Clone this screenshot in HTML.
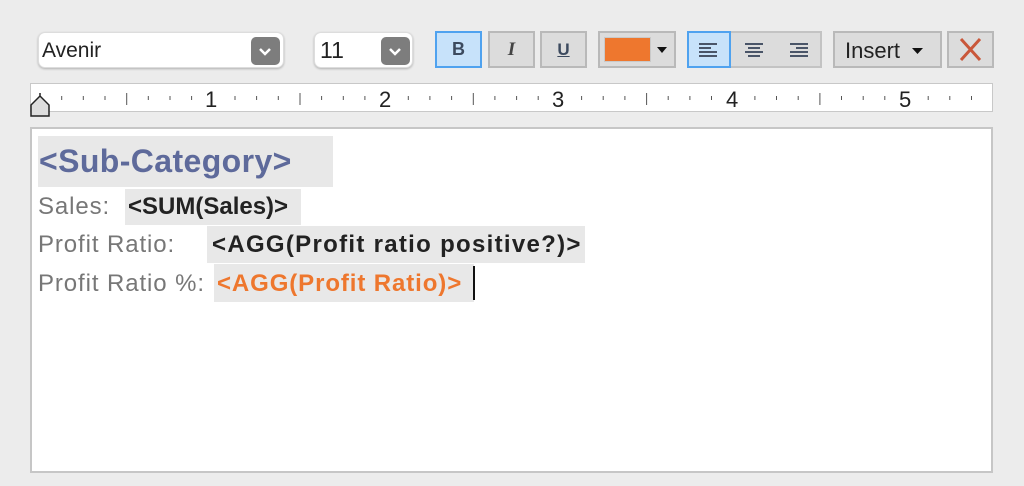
<!DOCTYPE html>
<html><head><style>
body{margin:0;width:1024px;height:486px;background:#ececec;font-family:"Liberation Sans",sans-serif;position:relative;overflow:hidden}
.a{position:absolute;box-sizing:border-box}
.sel{background:#fff;border-radius:7px;box-shadow:0 1px 2px rgba(0,0,0,.25);border:1px solid #ddd}
.arr{background:#7d7d7d;border-radius:5px;width:29px;height:28px;top:4px}
.btn{background:#dcdcdc;border:2px solid #b9b9b9}
.ct{color:#222;font-size:24px;letter-spacing:1.3px}
.lt{font-size:24px;color:#777;letter-spacing:0.9px}
.hl{background:#e8e8e8}
.t{position:absolute;white-space:nowrap;line-height:1}
</style></head><body>
<div class="a sel" style="left:38px;top:32px;width:246px;height:36px"><span class="t" style="left:3px;top:7px;font-size:21px;color:#222">Avenir</span>
<div class="a arr" style="left:212px"><svg width="29" height="28"><path d="M9 12l5 5 5-5" stroke="#fff" stroke-width="2.5" fill="none"/></svg></div></div>
<div class="a sel" style="left:314px;top:32px;width:99px;height:36px"><span class="t" style="left:5px;top:6px;font-size:23px;color:#222">11</span>
<div class="a arr" style="left:66px"><svg width="29" height="28"><path d="M9 12l5 5 5-5" stroke="#fff" stroke-width="2.5" fill="none"/></svg></div></div>
<div class="a" style="left:435px;top:31px;width:47px;height:37px;background:#c7e2fa;border:2px solid #4fa2ef;text-align:center;line-height:33px;font-weight:bold;font-size:18px;color:#3c4a5e">B</div>
<div class="a btn" style="left:488px;top:31px;width:47px;height:37px;text-align:center;line-height:33px;font-style:italic;font-weight:bold;font-size:19px;color:#444;font-family:'Liberation Serif',serif">I</div>
<div class="a btn" style="left:540px;top:31px;width:47px;height:37px;text-align:center;line-height:33px;font-weight:bold;font-size:17px;color:#3c4a5e;text-decoration:underline">U</div>
<div class="a btn" style="left:598px;top:31px;width:78px;height:37px"><div class="a" style="left:4px;top:4px;width:47px;height:25px;background:#ee772e;border:1px solid #c9c9c9"></div>
<svg class="a" style="left:56px;top:12px" width="14" height="10"><path d="M1 2h10l-5 6z" fill="#111"/></svg></div>
<div class="a btn" style="left:687px;top:31px;width:135px;height:37px;border-color:#c3c3c3"></div>
<div class="a" style="left:687px;top:31px;width:44px;height:37px;background:#c7e2fa;border:2px solid #4fa2ef"></div>
<svg class="a" style="left:687px;top:31px" width="135" height="37"><g stroke="#4a5568" stroke-width="2">
<path d="M12 13h18M12 17h12M12 21h18M12 25h18"/>
<path d="M58 13h18M61 17h12M58 21h18M61 25h12"/>
<path d="M103 13h18M109 17h12M103 21h18M103 25h18"/></g></svg>
<div class="a btn" style="left:833px;top:31px;width:109px;height:37px"><span class="t" style="left:10px;top:7px;font-size:22px;color:#222">Insert</span>
<svg class="a" style="left:76px;top:13px" width="14" height="10"><path d="M1 2h11l-5.5 6z" fill="#111"/></svg></div>
<div class="a btn" style="left:947px;top:31px;width:47px;height:37px"><svg width="43" height="33"><path d="M12 6l19 21M31 6l-19 21" stroke="#c9573a" stroke-width="3"/></svg></div>
<div class="a" style="left:30px;top:83px;width:963px;height:29px;background:#fff;border:1px solid #c8c8c8"></div>
<svg class="a" style="left:0;top:83px" width="1024" height="40" id="r"></svg>
<div class="t" style="left:205px;top:89px;font-size:22px;color:#222">1</div>
<div class="t" style="left:379px;top:89px;font-size:22px;color:#222">2</div>
<div class="t" style="left:552px;top:89px;font-size:22px;color:#222">3</div>
<div class="t" style="left:726px;top:89px;font-size:22px;color:#222">4</div>
<div class="t" style="left:899px;top:89px;font-size:22px;color:#222">5</div>
<div class="a" style="left:30px;top:127px;width:963px;height:346px;background:#fff;border:2px solid #c6c6c6"></div>
<div class="a hl" style="left:38px;top:136px;width:295px;height:51px"></div>
<div class="t" style="left:39px;top:145px;font-size:32px;font-weight:bold;color:#5e6a9b;letter-spacing:0.4px">&lt;Sub-Category&gt;</div>
<div class="a hl" style="left:125px;top:189px;width:176px;height:36px"></div>
<div class="t lt" style="left:38px;top:195px">Sales:</div>
<div class="t ct" style="left:128px;top:195px;font-weight:bold;letter-spacing:0">&lt;SUM(Sales)&gt;</div>
<div class="a hl" style="left:207px;top:226px;width:378px;height:37px"></div>
<div class="t lt" style="left:38px;top:233px">Profit Ratio:</div>
<div class="t ct" style="left:212px;top:233px;font-weight:bold">&lt;AGG(Profit ratio positive?)&gt;</div>
<div class="a hl" style="left:214px;top:264px;width:260px;height:38px"></div>
<div class="t lt" style="left:38px;top:272px">Profit Ratio %:</div>
<div class="t" style="left:217px;top:272px;font-size:24px;font-weight:bold;color:#ee772e;letter-spacing:0.9px">&lt;AGG(Profit Ratio)&gt;</div>
<div class="a" style="left:473px;top:266px;width:2px;height:34px;background:#111"></div>
<script>
var s='',o=40,u=173.3/8;
for(var i=1;i<44;i++){if(i%8==0)continue;var x=o+i*u;var h=(i%4==0)?[10,22]:[13,17];s+='<path d="M'+x.toFixed(1)+' '+h[0]+'v'+(h[1]-h[0])+'" stroke="#555" stroke-width="1"/>';}
s+='<path d="M40 10v4M31 22l9-9 9 9v11h-18z" stroke="#222" stroke-width="1.5" fill="#ddd"/>';
document.getElementById('r').innerHTML=s;
</script>
</body></html>
